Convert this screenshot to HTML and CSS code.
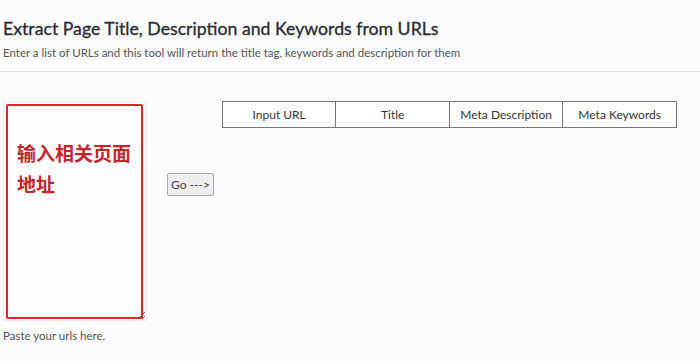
FILE: index.html
```html
<!DOCTYPE html>
<html lang="en">
<head>
    <meta charset="UTF-8">
    <title>Extract Page Title, Description and Keywords from URLs</title>
    <link rel="stylesheet" href="styles.css">
</head>
<body>
    <div class="page-head">
        <h1>Extract Page Title, Description and Keywords from URLs</h1>
        <p>Enter a list of URLs and this tool will return the title tag, keywords and description for them</p>
    </div>
    <div class="tool">
        <div class="input-col">
            <div class="input-wrap">
                <textarea class="urls"></textarea>
                <div class="note">输入相关页面<br>地址</div>
            </div>
            <p class="hint">Paste your urls here.</p>
        </div>
        <div class="go-col">
            <button class="go">Go ---&gt;</button>
        </div>
        <table class="results">
            <tr>
                <th>Input URL</th>
                <th>Title</th>
                <th>Meta Description</th>
                <th>Meta Keywords</th>
            </tr>
        </table>
    </div>
</body>
</html>
```

FILE: styles.css
```css
body {
    margin: 0;
    background: #fbfbfd;
    font-family: Lato, "Open Sans", Arial, sans-serif;
    color: #333;
}

.page-head {
    padding: 17px 3px 10px;
    border-bottom: 1px solid #e6e6e8;
}

.page-head h1 {
    margin: 0;
    font-size: 17.7px;
    line-height: 24px;
    font-weight: normal;
    color: #2a2a30;
    -webkit-text-stroke: 0.3px #2a2a30;
}

.page-head p {
    margin: 4px 0 0;
    font-size: 11.5px;
    line-height: 16px;
    color: #555;
}

.tool {
    display: flex;
    align-items: flex-start;
    padding: 29px 3px 0;
}

.input-wrap {
    position: relative;
}

.urls {
    display: block;
    width: 144px;
    height: 220px;
    margin: 0;
    padding: 0;
    box-sizing: border-box;
    border: 1px solid #ededed;
    background: #fdfdff;
}

.note {
    position: absolute;
    left: 3px;
    top: 3px;
    width: 137px;
    height: 215px;
    box-sizing: border-box;
    border: 2px solid #d9282b;
    border-radius: 2px;
    padding: 31px 0 0 9px;
    font-family: "Noto Sans CJK SC", sans-serif;
    font-size: 19px;
    font-weight: bold;
    line-height: 31px;
    color: #c3262a;
}

.hint {
    margin: 8px 0 0;
    font-size: 11.5px;
    color: #555;
}

.go-col {
    padding: 72px 8px 0 20px;
}

.go {
    font-family: Lato, "Open Sans", Arial, sans-serif;
    font-size: 12px;
    color: #444;
    background: #eeeef0;
    border: 1px solid #aaa;
    border-radius: 2px;
    padding: 3px 3px;
}

.results {
    flex: none;
    border-collapse: collapse;
    width: 455px;
}

.results th {
    border: 1px solid #777;
    background: #fff;
    font-size: 12px;
    font-weight: normal;
    color: #333;
    height: 25px;
    padding: 0;
    width: 25%;
}
```
